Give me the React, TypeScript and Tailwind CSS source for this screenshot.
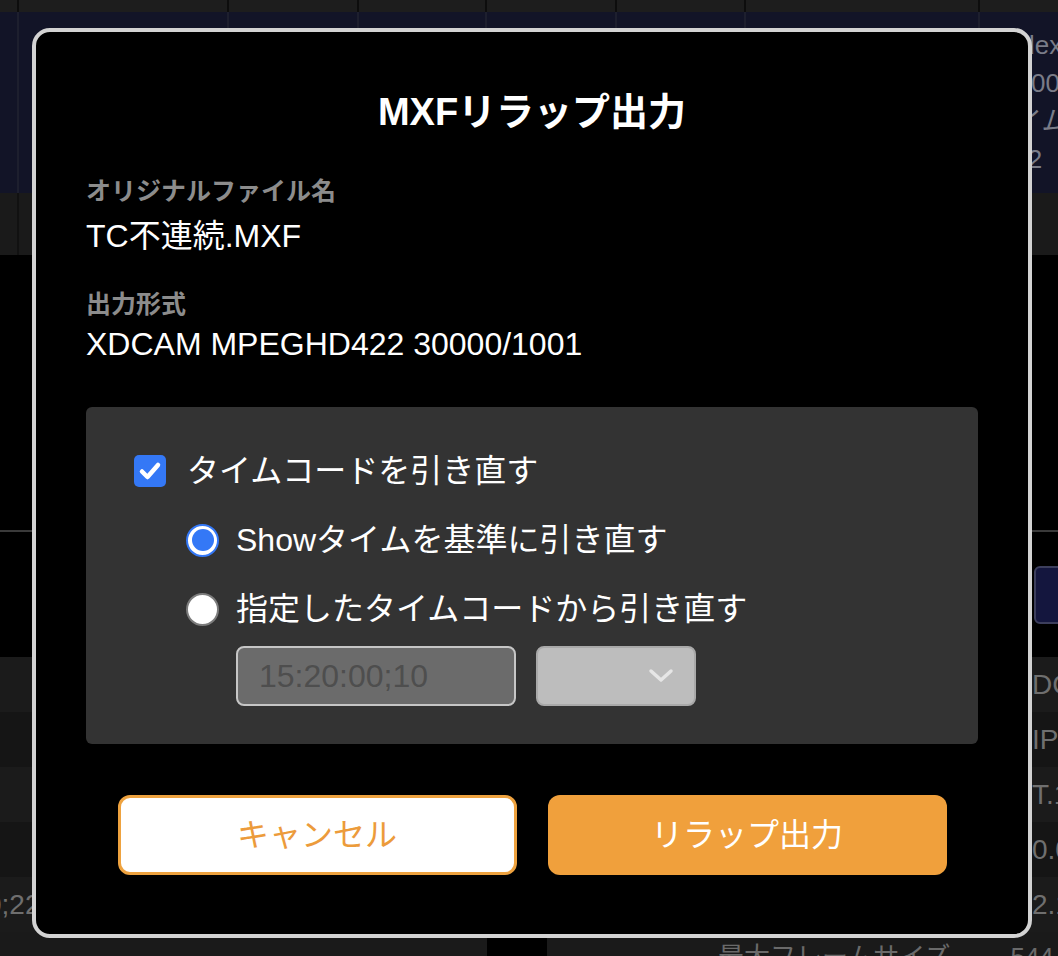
import React from 'react'

const FONT = "font-['Liberation_Sans','Noto_Sans_CJK_JP',sans-serif]"

// column dividers for the header/table rows in the background
const COLS = [19, 210, 130, 128, 130, 129, 234]

function ColumnRow({ className }: { className: string }) {
  return (
    <div className={`flex ${className}`}>
      {COLS.map((w, i) => (
        <div key={i} style={{ width: w }} className="shrink-0 border-r-2 border-[#0d0d0d]" />
      ))}
      <div className="flex-1" />
    </div>
  )
}

function Background() {
  const rows = [
    { bg: 'bg-[#1b1b1b]', right: 'DC', left: '' },
    { bg: 'bg-[#151515]', right: 'IPE', left: '' },
    { bg: 'bg-[#1b1b1b]', right: 'T.1', left: '' },
    { bg: 'bg-[#151515]', right: '0.0', left: '' },
    { bg: 'bg-[#1b1b1b]', right: '2.1', left: '0;22' },
  ]
  return (
    <div className="w-[1058px] h-[956px] overflow-hidden bg-black">
      <ColumnRow className="h-[12px] bg-[#1d1d1d]" />
      {/* navy selected row */}
      <div className="h-[181px] bg-[#121427] flex">
        {COLS.map((w, i) => (
          <div key={i} style={{ width: w }} className="shrink-0 border-r-2 border-[#1d1f2e]" />
        ))}
        <div className="flex-1 min-w-0 overflow-hidden pt-[14px] text-[26px] leading-[38px] text-[#7a7c88] whitespace-nowrap">
          <div className="ml-[20px]">index</div>
          <div className="ml-[22px]">1000</div>
          <div className="ml-[10px]">タイム</div>
          <div className="ml-[26px]">1,2</div>
        </div>
      </div>
      <div className="h-[62px] bg-[#1a1a1a] flex">
        <div className="w-[19px] border-r-2 border-[#111]" />
      </div>
      <div className="h-[275px]" />
      <div className="h-[2px] bg-[#3a3a3a]" />
      <div className="h-[125px] flex justify-end items-center">
        <div className="w-[40px] h-[58px] -mr-[16px] rounded-[6px] bg-[#14163e] border-2 border-[#3c3e5c]" />
      </div>
      {rows.map((r, i) => (
        <div key={i} className={`h-[55px] ${r.bg} flex items-center justify-between text-[28px] text-[#6f6f6f] overflow-hidden`}>
          <span className="-ml-[14px] whitespace-nowrap">{r.left}</span>
          <span className="mr-[-20px] w-[46px] whitespace-nowrap overflow-hidden">{r.right}</span>
        </div>
      ))}
      <div className="h-[40px] flex bg-[#1a1a1a] text-[26px] text-[#6a6a6a] leading-[30px]">
        <div className="w-[487px] shrink-0" />
        <div className="w-[60px] shrink-0 bg-black" />
        <div className="flex-1 min-w-0 overflow-hidden pl-[171px] pt-[10px] whitespace-nowrap">
          最大フレームサイズ<span className="ml-[60px]">544</span>
        </div>
      </div>
    </div>
  )
}

function Checkbox() {
  return (
    <div className="w-[32px] h-[32px] rounded-[5px] bg-[#3478f6] flex items-center justify-center">
      <svg width="26" height="26" viewBox="0 0 26 26" fill="none">
        <path d="M5 13.5 L10.5 19 L21 7" stroke="white" strokeWidth="4.5" strokeLinecap="round" strokeLinejoin="round" />
      </svg>
    </div>
  )
}

function Radio({ checked }: { checked?: boolean }) {
  if (checked) {
    return (
      <div className="w-[33px] h-[33px] rounded-full border-[2.5px] border-[#3478f6] bg-white flex items-center justify-center">
        <div className="w-[22px] h-[22px] rounded-full bg-[#3478f6]" />
      </div>
    )
  }
  return <div className="w-[33px] h-[33px] rounded-full border-[2.5px] border-[#7c7c7c] bg-white" />
}

export default function App() {
  return (
    <div className={`relative w-[1058px] h-[956px] ${FONT}`}>
      <Background />

      {/* dialog */}
      <div className="absolute left-[32px] top-[28px] w-[1000px] h-[910px] rounded-[18px] border-4 border-[#d3d3d3] bg-black px-[50px] flex flex-col">
        <h1 className="pt-[56px] text-center text-[38px] leading-[48px] font-bold text-white">MXFリラップ出力</h1>

        <div className="mt-[37px] text-[25px] leading-[36px] font-bold text-[#8c8c8c]">オリジナルファイル名</div>
        <div className="mt-[7px] text-[32px] leading-[40px] text-white">TC不連続.MXF</div>

        <div className="mt-[30px] text-[25px] leading-[36px] font-bold text-[#8c8c8c]">出力形式</div>
        <div className="mt-[2px] text-[32px] leading-[40px] text-white">XDCAM MPEGHD422 30000/1001</div>

        {/* options */}
        <div className="mt-[43px] h-[337px] rounded-[6px] bg-[#333333] pl-[48px] pt-[44px] flex flex-col">
          <label className="h-[40px] flex items-center gap-[21px] text-[32px] text-white">
            <Checkbox />
            <span>タイムコードを引き直す</span>
          </label>
          <div className="pl-[52px] flex flex-col">
            <label className="mt-[29px] h-[40px] flex items-center gap-[17px] text-[32px] text-white">
              <Radio checked />
              <span>Showタイムを基準に引き直す</span>
            </label>
            <label className="mt-[29px] h-[40px] flex items-center gap-[17px] text-[32px] text-white">
              <Radio />
              <span>指定したタイムコードから引き直す</span>
            </label>
            <div className="mt-[17px] pl-[50px] flex gap-[20px]">
              <div className="w-[280px] h-[60px] rounded-[8px] border-2 border-[#c6c6c6] bg-[#6b6b6b] pl-[21px] flex items-center text-[32px] text-[#4e4e4e]">
                15:20:00;10
              </div>
              <div className="w-[160px] h-[60px] rounded-[8px] border-2 border-[#a9a9a9] bg-[#bdbdbd] flex items-center justify-end pr-[20px]">
                <svg width="26" height="16" viewBox="0 0 26 16" fill="none">
                  <path d="M3 3 L13 12 L23 3" stroke="#e6e6e6" strokeWidth="3.5" strokeLinecap="round" strokeLinejoin="round" />
                </svg>
              </div>
            </div>
          </div>
        </div>

        {/* actions */}
        <div className="mt-[51px] flex justify-center gap-[31px]">
          <button className="w-[399px] h-[80px] rounded-[12px] border-[3px] border-[#eea23f] bg-white text-[32px] text-[#ec9b3b]">
            キャンセル
          </button>
          <button className="w-[399px] h-[80px] rounded-[12px] bg-[#f0a03c] text-[32px] text-white">
            リラップ出力
          </button>
        </div>
      </div>
    </div>
  )
}
